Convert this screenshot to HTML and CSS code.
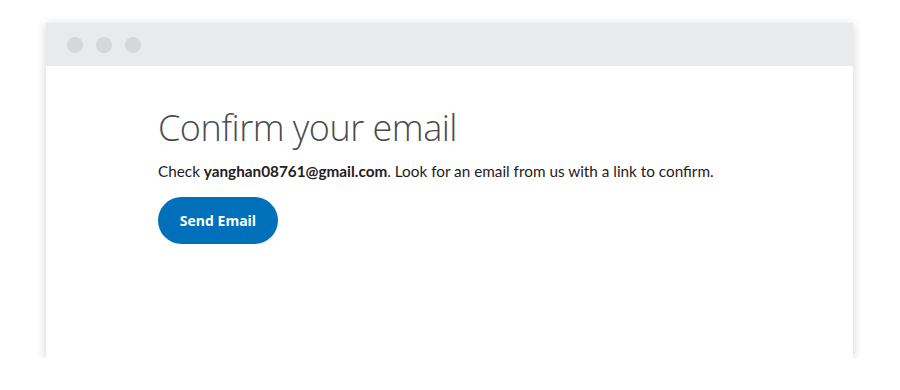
FILE: index.html
```html
<!DOCTYPE html>
<html lang="en">
<head>
    <meta charset="UTF-8">
    <title>Confirm your email</title>
    <link rel="stylesheet" href="styles.css">
</head>
<body>
    <div class="window">
        <div class="titlebar">
            <span class="dot"></span>
            <span class="dot"></span>
            <span class="dot"></span>
        </div>
        <main class="content">
            <h1>Confirm your email</h1>
            <p>Check <b>yanghan08761@gmail.com</b>. Look for an email from us with a link to confirm.</p>
            <button class="send-btn">Send Email</button>
        </main>
    </div>
</body>
</html>
```

FILE: styles.css
```css
/* General */
body {
    margin: 0;
    background: #ffffff;
    font-family: Lato, "Liberation Sans", sans-serif;
    color: #2c2e2f;
}

/* Browser window frame */
.window {
    width: 807px;
    height: 335px;
    margin: 23px 0 0 46px;
    background: #ffffff;
    box-shadow: 0 2px 10px rgba(0, 0, 0, 0.18);
    display: flex;
    flex-direction: column;
}

.titlebar {
    height: 43px;
    background: #e9eaeb;
    display: flex;
    align-items: center;
    gap: 13px;
    padding-left: 21px;
}

.dot {
    width: 16px;
    height: 16px;
    border-radius: 50%;
    background: #d6d7d8;
}

/* Content */
.content {
    padding: 38px 0 0 112px;
}

.content h1 {
    margin: 0;
    font-family: "Open Sans", sans-serif;
    font-weight: 300;
    font-size: 36px;
    line-height: 48px;
    letter-spacing: -0.5px;
    color: #4a4c4e;
}

.content p {
    margin: 8px 0 15px;
    font-size: 15.3px;
    line-height: 22px;
    color: #1f2021;
}

.content p b {
    font-weight: 700;
}

.send-btn {
    width: 120px;
    height: 47px;
    border: none;
    border-radius: 24px;
    background: #0070ba;
    color: #ffffff;
    font-family: "Open Sans", "Liberation Sans", sans-serif;
    font-size: 14px;
    font-weight: 700;
    cursor: pointer;
}
```
